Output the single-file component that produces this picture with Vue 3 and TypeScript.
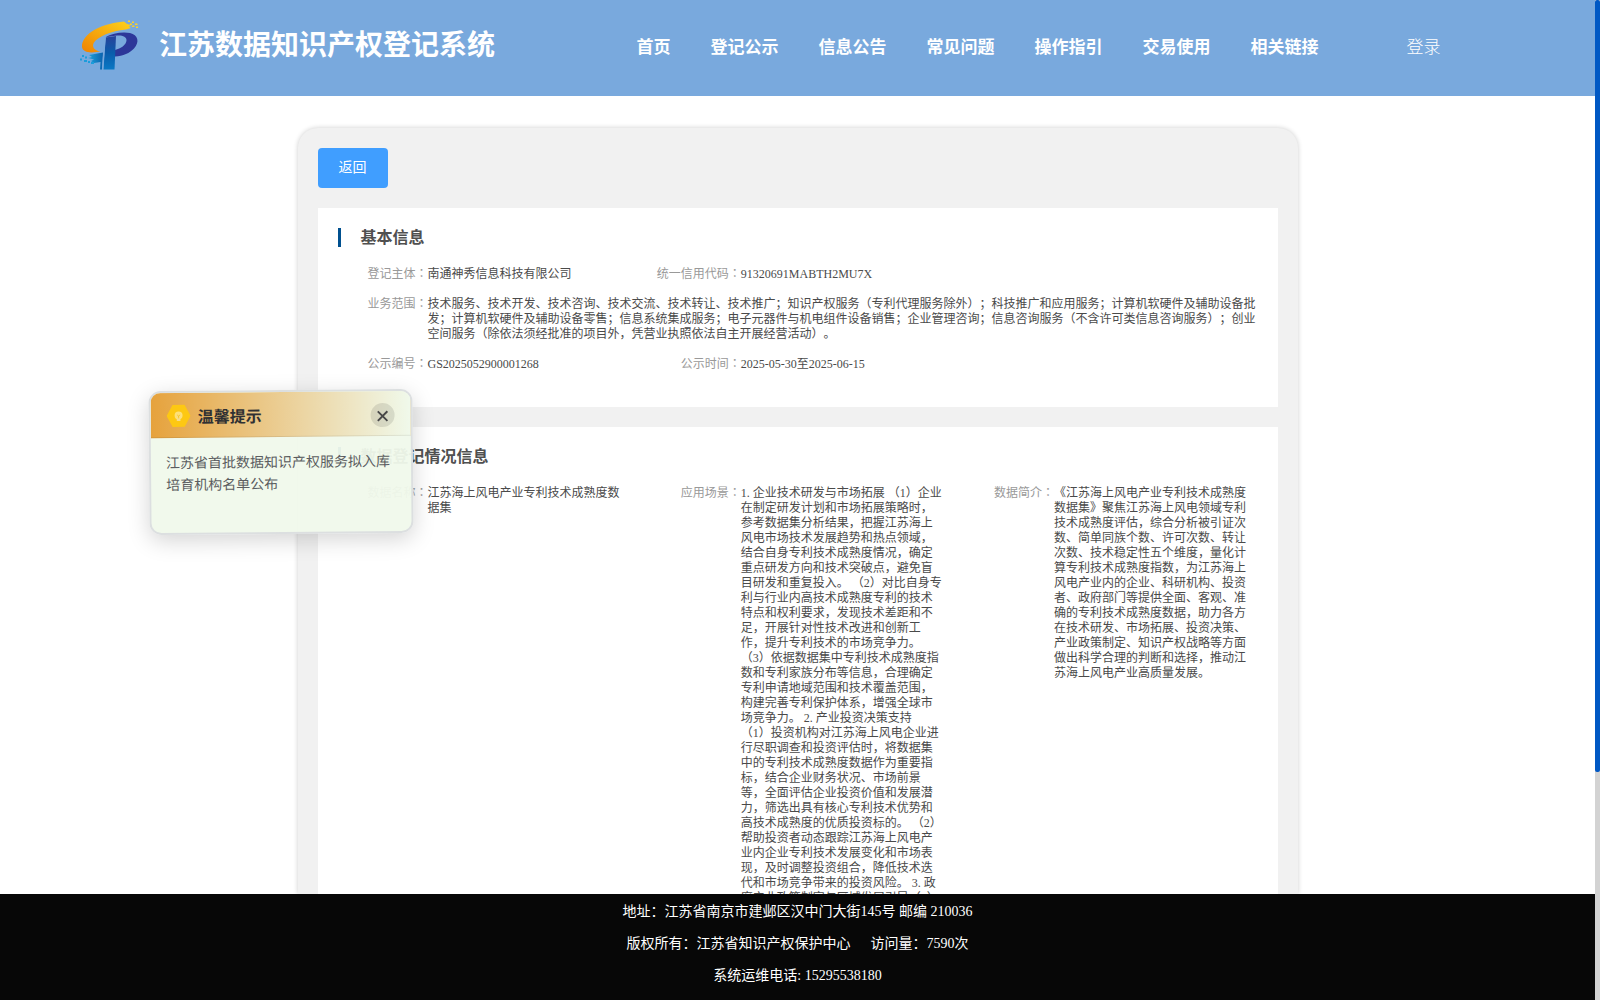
<script setup lang="ts">
interface Field {
  label: string
  lines: string[]
  wide?: boolean
}

const navItems: string[] = ['首页', '登记公示', '信息公告', '常见问题', '操作指引', '交易使用', '相关链接']

const basicInfo: Field[] = [
  { label: '登记主体', lines: ['南通神秀信息科技有限公司'] },
  { label: '统一信用代码', lines: ['91320691MABTH2MU7X'] },
  {
    label: '业务范围',
    wide: true,
    lines: [
      '技术服务、技术开发、技术咨询、技术交流、技术转让、技术推广；知识产权服务（专利代理服务除外）；科技推广和应用服务；计算机软硬件及辅助设备批',
      '发；计算机软硬件及辅助设备零售；信息系统集成服务；电子元器件与机电组件设备销售；企业管理咨询；信息咨询服务（不含许可类信息咨询服务）；创业',
      '空间服务（除依法须经批准的项目外，凭营业执照依法自主开展经营活动）。',
    ],
  },
  { label: '公示编号', lines: ['GS2025052900001268'] },
  { label: '公示时间', lines: ['2025-05-30至2025-06-15'] },
]

const dataInfo: Field[] = [
  { label: '数据名称', lines: ['江苏海上风电产业专利技术成熟度数', '据集'] },
  {
    label: '应用场景',
    lines: [
      '1. 企业技术研发与市场拓展 （1）企业',
      '在制定研发计划和市场拓展策略时，',
      '参考数据集分析结果，把握江苏海上',
      '风电市场技术发展趋势和热点领域，',
      '结合自身专利技术成熟度情况，确定',
      '重点研发方向和技术突破点，避免盲',
      '目研发和重复投入。 （2）对比自身专',
      '利与行业内高技术成熟度专利的技术',
      '特点和权利要求，发现技术差距和不',
      '足，开展针对性技术改进和创新工',
      '作，提升专利技术的市场竞争力。',
      '（3）依据数据集中专利技术成熟度指',
      '数和专利家族分布等信息，合理确定',
      '专利申请地域范围和技术覆盖范围，',
      '构建完善专利保护体系，增强全球市',
      '场竞争力。 2. 产业投资决策支持',
      '（1）投资机构对江苏海上风电企业进',
      '行尽职调查和投资评估时，将数据集',
      '中的专利技术成熟度数据作为重要指',
      '标，结合企业财务状况、市场前景',
      '等，全面评估企业投资价值和发展潜',
      '力，筛选出具有核心专利技术优势和',
      '高技术成熟度的优质投资标的。 （2）',
      '帮助投资者动态跟踪江苏海上风电产',
      '业内企业专利技术发展变化和市场表',
      '现，及时调整投资组合，降低技术迭',
      '代和市场竞争带来的投资风险。 3. 政',
      '府产业政策制定与区域发展引导（1）',
    ],
  },
  {
    label: '数据简介',
    lines: [
      '《江苏海上风电产业专利技术成熟度',
      '数据集》聚焦江苏海上风电领域专利',
      '技术成熟度评估，综合分析被引证次',
      '数、简单同族个数、许可次数、转让',
      '次数、技术稳定性五个维度，量化计',
      '算专利技术成熟度指数，为江苏海上',
      '风电产业内的企业、科研机构、投资',
      '者、政府部门等提供全面、客观、准',
      '确的专利技术成熟度数据，助力各方',
      '在技术研发、市场拓展、投资决策、',
      '产业政策制定、知识产权战略等方面',
      '做出科学合理的判断和选择，推动江',
      '苏海上风电产业高质量发展。',
    ],
  },
]

const sections = [
  { title: '基本信息', fields: basicInfo },
  { title: '数据登记情况信息', fields: dataInfo },
]
</script>

<template>
  <div class="page">
    <div class="view">
      <header class="header">
        <svg class="logo" viewBox="0 0 60 54" width="60" height="54">
          <defs>
            <linearGradient id="gold" x1="0" y1="1" x2="1" y2="0">
              <stop offset="0" stop-color="#f08200" />
              <stop offset="1" stop-color="#fdd21c" />
            </linearGradient>
            <linearGradient id="stem" x1="0" y1="0" x2="0" y2="1">
              <stop offset="0" stop-color="#28429b" />
              <stop offset=".5" stop-color="#0a5cab" />
              <stop offset="1" stop-color="#0a78c4" />
            </linearGradient>
            <linearGradient id="tail" x1="0" y1="0" x2="1" y2="0">
              <stop offset="0" stop-color="#1ba4dc" />
              <stop offset="1" stop-color="#0c62ae" />
            </linearGradient>
          </defs>
          <path
            fill="url(#gold)"
            d="M44 2.5C34 3.5 23 6 15 10.5C6 15.5 1.5 22 2 28C2.5 32 7 33.6 12 33.4L20.5 32.5C14 31.5 11.5 27.500 14 23.500C18 17.500 31 12 46 10.500L51 9L49 7.500L51 6L47 5Z"
          />
          <path fill="url(#tail)" d="M9 36L23 33.500L22 50.500H20L20.500 43L14 44L11 42L14 40.500L8 39L12 38Z" />
          <path
            fill="#2d3799"
            fill-rule="evenodd"
            d="M25 18.500C32 14 43 12.500 50 14C58 16 60 23 54 29.500C50 34 43 37 35 37.500V31C41 29.500 46 26 46.500 21.500C46.800 17.500 42 16 37 16.500C32 17 28 18 25 18.500Z"
          />
          <path fill="url(#stem)" d="M25.500 18.500L36 17L34.500 50.500H23.500Z" />
          <path fill="#79a9dd" d="M24.300 18.500L22 50.500H23L26 18Z" />
          <path
            fill="#fbd22a"
            d="M48 1.500h2V3h-2zM52 2.500h2V4h-2zM50 4.500h2V6h-2zM55 4.500h2.500V6H55zM52 6.500h2.500V8H52zM56 7.500h2V9h-2z"
          />
          <path
            fill="#1b9ddb"
            d="M2 36h2v2H2zM5 37.500h2v2H5zM0 39.500h2v2H0zM4 41h3v2H4zM8 42h2v2H8zM11 43h3v2h-3z"
          />
        </svg>
        <h1 class="site-title">江苏数据知识产权登记系统</h1>
        <nav class="nav">
          <a v-for="item in navItems" :key="item">{{ item }}</a>
        </nav>
        <a class="login">登录</a>
      </header>

      <main class="card">
        <button class="back" type="button">返回</button>
        <section v-for="section in sections" :key="section.title" class="section">
          <h2 class="section-title">{{ section.title }}</h2>
          <div class="fields">
            <div v-for="field in section.fields" :key="field.label" class="field" :class="{ wide: field.wide }">
              <div class="label">{{ field.label }}<span class="colon">：</span></div>
              <div class="value">
                <div v-for="(line, i) in field.lines" :key="i">{{ line }}</div>
              </div>
            </div>
          </div>
        </section>
      </main>

      <footer class="footer">
        <p>地址：江苏省南京市建邺区汉中门大街145号 邮编 210036</p>
        <p>版权所有：江苏省知识产权保护中心<span class="visits">访问量：7590次</span></p>
        <p>系统运维电话: 15295538180</p>
      </footer>
    </div>

    <div class="scrollbar"><div class="thumb"></div></div>

    <aside class="notice">
      <div class="notice-head">
        <svg class="hex" viewBox="0 0 24 24" width="24" height="24">
          <path fill="#fdc813" d="M6 1H18L24 12L18 23H6L0 12Z" />
          <circle cx="12" cy="11.500" r="4" fill="#fde07a" />
          <path d="M10.200 14h3.600v3h-3.600z" fill="#f6dc8e" />
          <path d="M10.500 11l1.500 1.200 1.500-1.200M12 12v2.500" fill="none" stroke="#f3b90c" stroke-width=".6" />
        </svg>
        <strong>温馨提示</strong>
        <span class="close">
          <svg viewBox="0 0 12 12" width="12" height="12">
            <path d="M1.200 1.200L10.800 10.800M10.800 1.200L1.200 10.800" stroke="#484848" stroke-width="1.900" fill="none" />
          </svg>
        </span>
      </div>
      <div class="notice-body">
        <div>江苏省首批数据知识产权服务拟入库</div>
        <div>培育机构名单公布</div>
      </div>
    </aside>
  </div>
</template>

<style>
body {
  margin: 0;
  overflow: hidden;
}
</style>

<style scoped>
.page {
  position: relative;
  display: flex;
  width: 1600px;
  height: 1000px;
  overflow: hidden;
  background: #fff;
  font-family: 'Liberation Serif', 'Noto Sans CJK SC', serif;
  text-spacing-trim: space-all;
  white-space: nowrap;
}

.view {
  display: flex;
  flex-direction: column;
  width: 1595px;
  height: 1000px;
}

.header {
  display: flex;
  align-items: center;
  flex: none;
  box-sizing: border-box;
  height: 96px;
  padding-left: 80px;
  background: #79a9dd;
  color: #fff;
}

.logo {
  margin-top: -5px;
}

.site-title {
  width: 477.5px;
  margin: -5px 0 0 19px;
  font-size: 28px;
  line-height: 40px;
  font-weight: 600;
}

.nav {
  display: flex;
  gap: 40px;
  margin-top: -1px;
  font-size: 17px;
  line-height: 24px;
  font-weight: 600;
}

.login {
  margin: -1px 0 0 88px;
  font-size: 17px;
  line-height: 24px;
  font-weight: 300;
}

.card {
  flex: 1;
  min-height: 0;
  box-sizing: border-box;
  width: 1000px;
  margin: 32px auto 0;
  padding: 20px;
  border-radius: 20px 20px 0 0;
  background: #f1f1f1;
  box-shadow: 0 0 5px rgba(0, 0, 0, 0.2);
}

.back {
  display: block;
  width: 70px;
  height: 40px;
  padding: 0;
  border: 0;
  border-radius: 4px;
  background: #409eff;
  color: #fff;
  font: 14px/40px 'Liberation Serif', 'Noto Sans CJK SC', serif;
}

.section {
  box-sizing: border-box;
  height: 199px;
  margin-top: 20px;
  padding: 20px 0 0 20px;
  background: #fff;
}

.section + .section {
  height: 600px;
}

.section-title {
  margin: 0 0 20px;
  padding-left: 20px;
  border-left: 3px solid #00508f;
  color: #505050;
  font-size: 16px;
  line-height: 19px;
  font-weight: 700;
}

.fields {
  display: grid;
  grid-template-columns: repeat(3, 313.3px);
  row-gap: 15px;
  color: #4a4a4a;
  font-size: 12px;
  line-height: 15px;
}

.field {
  display: flex;
}

.field.wide {
  grid-column: 1 / -1;
}

.field:nth-child(4) {
  grid-column: 1;
}

.label {
  flex: none;
  width: 90px;
  text-align: right;
  color: #999;
}

.colon {
  font-family: 'Noto Sans CJK TC', sans-serif;
  line-height: 1;
}

.footer {
  flex: none;
  box-sizing: border-box;
  height: 106px;
  padding-top: 2px;
  background: #070707;
  color: #fff;
  font-size: 14px;
  text-align: center;
  position: relative;
}

.footer p {
  margin: 0;
  line-height: 32px;
}

.visits {
  margin-left: 20px;
}

.scrollbar {
  width: 5px;
  background: #d3d3d3;
}

.thumb {
  height: 772px;
  border-radius: 2px;
  background: #0058c4;
}

.notice {
  position: absolute;
  left: 149px;
  top: 390px;
  box-sizing: border-box;
  width: 264px;
  height: 144px;
  border: 2px solid #dcdfe0;
  border-radius: 12px;
  overflow: hidden;
  background: rgba(240, 249, 235, 0.95);
  box-shadow: 0 6px 22px rgba(0, 0, 0, 0.17);
  transform: rotate(-0.5deg);
  z-index: 5;
}

.notice-head {
  display: flex;
  align-items: center;
  box-sizing: border-box;
  height: 45px;
  padding: 2px 16px 0;
  border-bottom: 1px solid rgba(0, 0, 0, 0.08);
  background: linear-gradient(90deg, #e6a23c, #f0f9eb);
  color: #303133;
}

.notice-head strong {
  flex: 1;
  margin: 3px 0 0 7px;
  font-size: 16px;
  line-height: 24px;
}

.close {
  display: flex;
  align-items: center;
  justify-content: center;
  width: 24px;
  height: 24px;
  margin-top: 1px;
  border-radius: 50%;
  background: rgba(0, 0, 0, 0.1);
}

.close svg {
  margin-top: 3px;
}

.notice-body {
  padding: 15px;
  color: #5b5d60;
  font-size: 14px;
  line-height: 22.4px;
}
</style>
